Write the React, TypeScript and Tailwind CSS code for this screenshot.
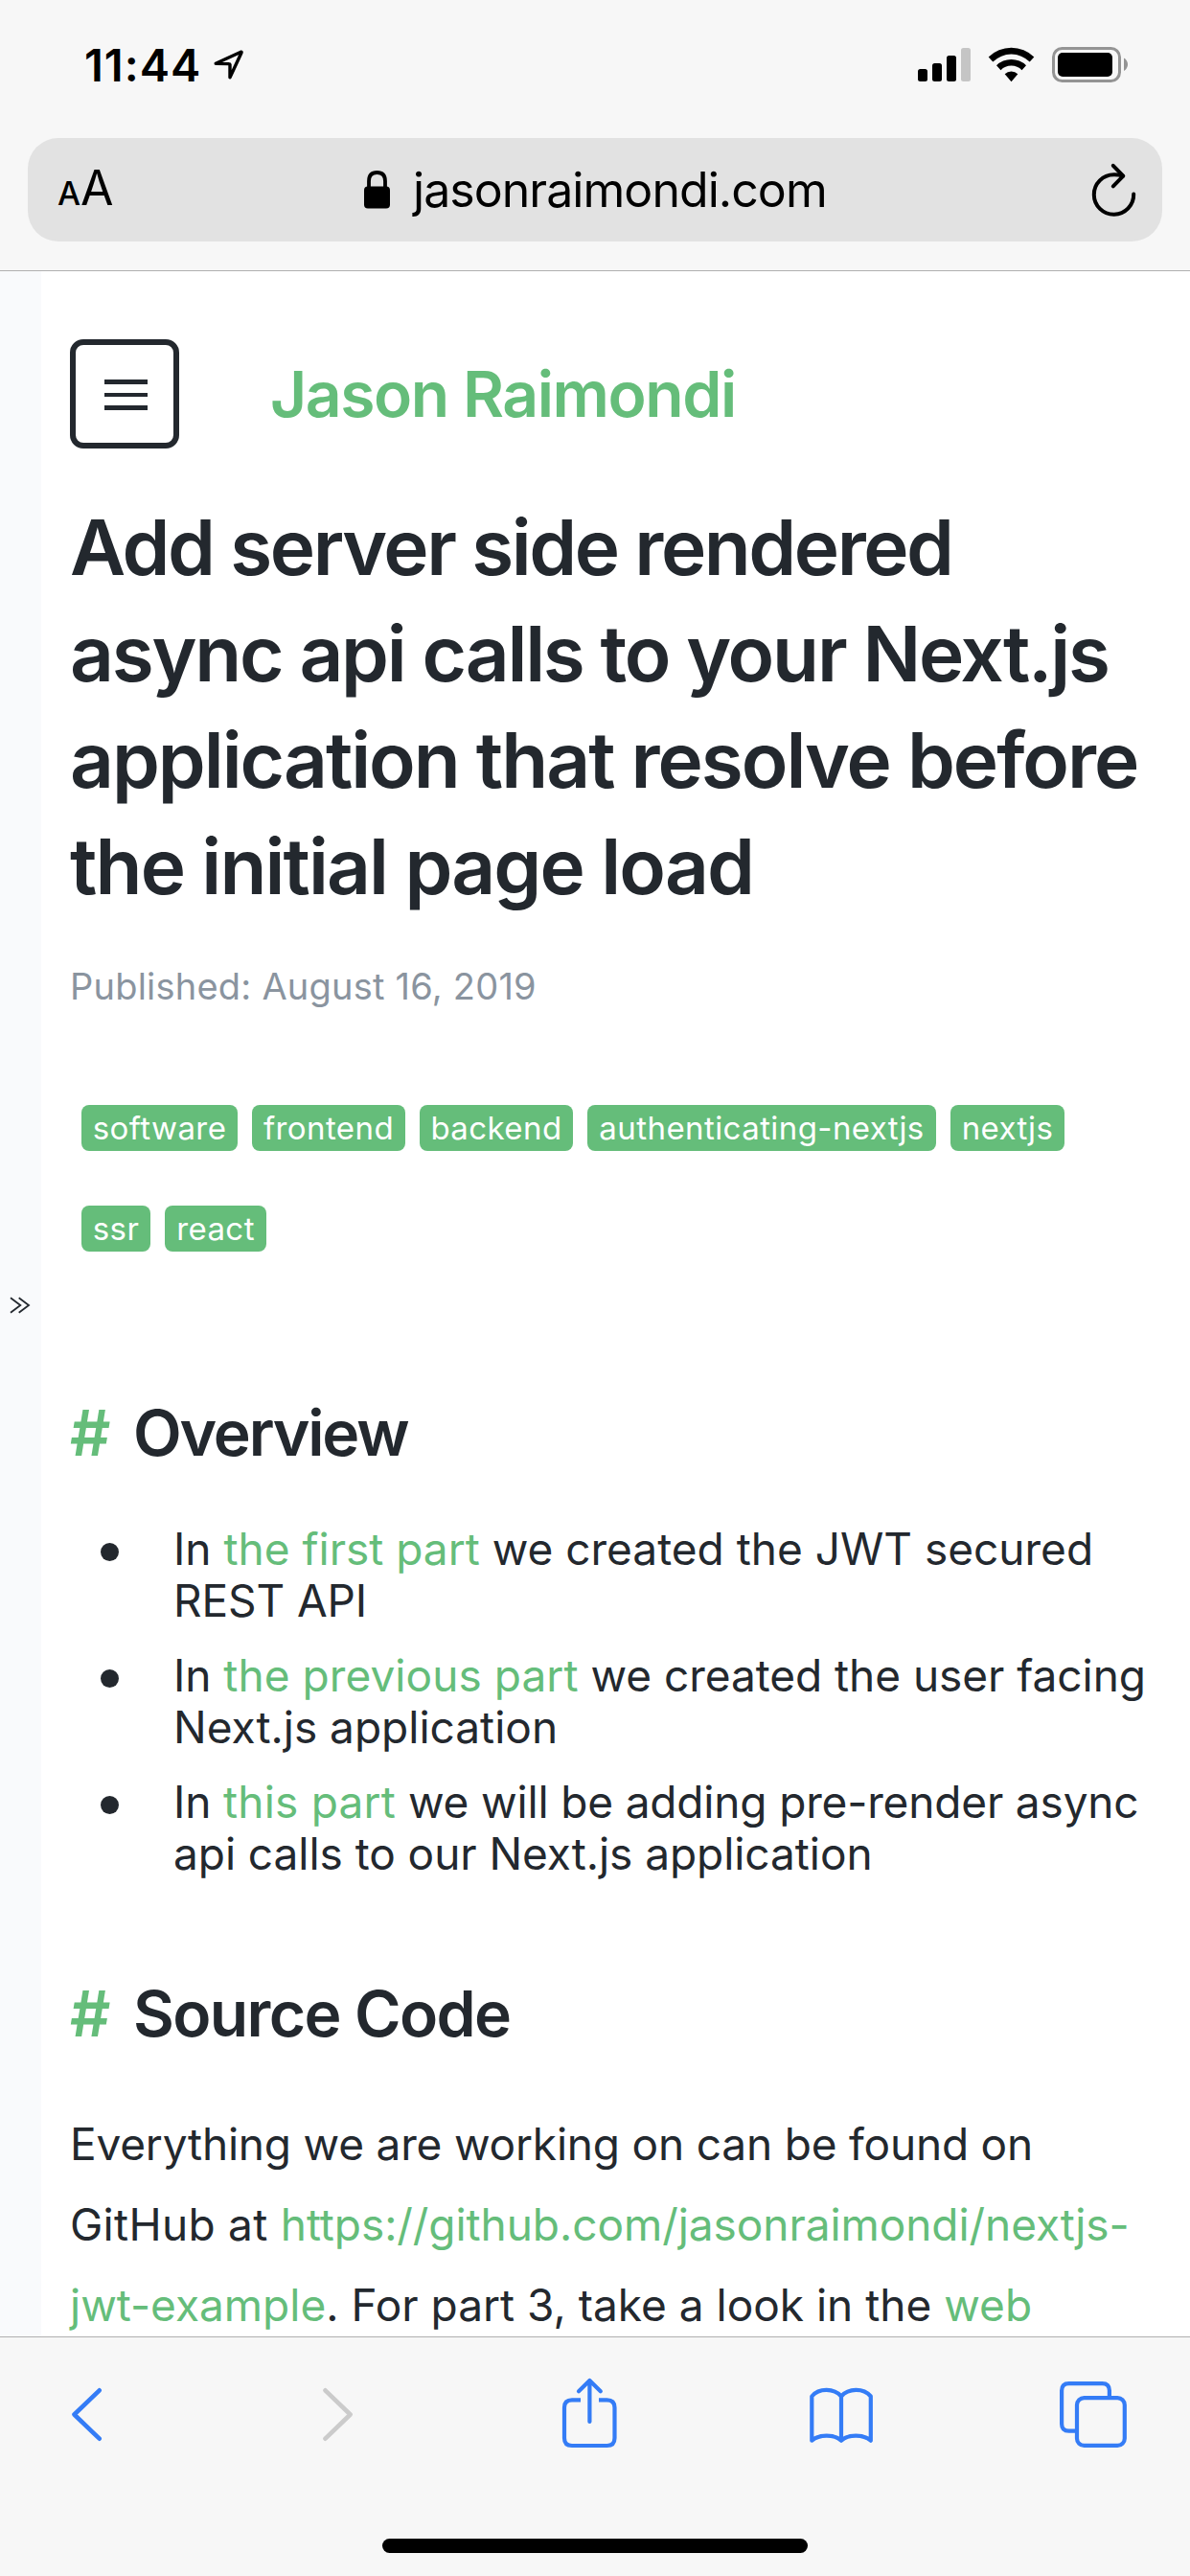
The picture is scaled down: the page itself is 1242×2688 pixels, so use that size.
import type { ReactNode } from 'react';

function StatusBar() {
  return (
    <div className="flex h-[144px] items-start pl-[88px] pr-[65px] pt-[32px]">
      <span className="h-[72px] w-[135px] whitespace-nowrap text-[47px] font-semibold leading-[72px] tracking-[1px]">11:44</span>
      <svg className="mt-[19px]" width="32" height="34" viewBox="0 0 32 34" fill="none">
        <path d="M2.2 15.2 L28.4 3.2 Q29.4 2.9 29 4 L17 29.8 L17 16.4 Q16.8 15.6 16 15.6 Z" stroke="#000" strokeWidth="3.4" strokeLinejoin="round" />
      </svg>
      <div className="grow" />
      <svg className="mt-[17px]" width="220" height="38" viewBox="957 49 220 38" fill="none">
        <rect x="958" y="72" width="10" height="13" rx="2.5" fill="#000" />
        <rect x="973" y="66" width="10" height="19" rx="2.5" fill="#000" />
        <rect x="988" y="58" width="10" height="27" rx="2.5" fill="#000" />
        <rect x="1003" y="50" width="10" height="35" rx="2.5" fill="#c5c5c5" />
        <path d="M1031.7 59.5 A34 34 0 0 1 1079.3 59.5 L1074.7 64.5 A27.2 27.2 0 0 0 1036.3 64.5 Z" fill="#000" />
        <path d="M1040 68.3 A22 22 0 0 1 1071 68.3 L1066.5 73.2 A15.5 15.5 0 0 0 1044.5 73.2 Z" fill="#000" />
        <path d="M1048.7 77.2 A10 10 0 0 1 1062.3 77.2 L1055.5 85.2 Z" fill="#000" />
        <rect x="1099.5" y="50.5" width="69" height="34" rx="9" stroke="#949494" strokeWidth="3" />
        <rect x="1104" y="55" width="57" height="25" rx="5" fill="#000" />
        <path d="M1173 60.5 Q1177 63 1177 67.2 Q1177 71.5 1173 74 Z" fill="#949494" />
      </svg>
    </div>
  );
}

function AddressBar() {
  return (
    <div className="mx-[29px] flex h-[108px] items-center rounded-[32px] bg-[#e2e2e2]">
      <div className="ml-[31px] mt-[2px] flex w-[320px] items-baseline leading-[72px]">
        <span className="text-[34px] font-medium">A</span>
        <span className="text-[50px]">A</span>
      </div>
      <svg className="-mt-[1px]" width="28" height="40" viewBox="0 0 28 40" fill="none">
        <rect x="0" y="16.5" width="27" height="23" rx="4" fill="#000" />
        <path d="M5 18 V11 Q5 2 13.5 2 Q22 2 22 11 V18" stroke="#000" strokeWidth="3.8" />
      </svg>
      <span className="ml-[23px] whitespace-nowrap text-[50px] leading-[72px] tracking-[-0.95px]">jasonraimondi.com</span>
      <div className="grow" />
      <svg className="mr-[25px]" width="50" height="60" viewBox="1138 168 50 60" fill="none" stroke="#000" strokeWidth="4" strokeLinecap="round" strokeLinejoin="round">
        <path d="M1183.2 202.5 A20.7 20.7 0 1 1 1162.5 182.3 Q1167 182.2 1172 183.7" />
        <path d="M1161.8 172.8 L1172.3 183.7 L1161.8 194.3" />
      </svg>
    </div>
  );
}

function Link({ children }: { children: ReactNode }) {
  return <a className="text-[#65bd7a]">{children}</a>;
}

function Tag({ width, children }: { width: string; children: ReactNode }) {
  return (
    <span className={`flex h-[48px] ${width} items-center justify-center rounded-[8px] bg-[#65bd7a] text-[33px] leading-none tracking-[0.42px] text-white`}>
      {children}
    </span>
  );
}

function SectionHeading({ spacing, children }: { spacing: string; children: ReactNode }) {
  return (
    <h2 className="flex h-[80px] whitespace-nowrap text-[66px] font-semibold leading-[80px]">
      <span className="w-[66px] text-[#65bd7a]">#</span>
      <span className={spacing}>{children}</span>
    </h2>
  );
}

function Item({ children }: { children: ReactNode }) {
  return (
    <li className="flex">
      <span className="ml-[32px] mt-[21px] size-[19px] shrink-0 rounded-full bg-[#23282e]" />
      <div className="ml-[57px]">{children}</div>
    </li>
  );
}

function Article() {
  return (
    <article className="w-[1169px] shrink-0 pl-[30px] pt-[71px]">
      <div className="flex h-[114px] items-center">
        <button className="flex size-[114px] flex-col items-center justify-center gap-[9px] rounded-[14px] border-[6px] border-[#23282e] pl-[3px] pt-[2px]">
          <span className="h-[4.5px] w-[45px] bg-[#23282e]" />
          <span className="h-[4.5px] w-[45px] bg-[#23282e]" />
          <span className="h-[4.5px] w-[45px] bg-[#23282e]" />
        </button>
        <span className="ml-[95px] whitespace-nowrap text-[66px] font-semibold leading-[80px] tracking-[-1.44px] text-[#65bd7a]">Jason Raimondi</span>
      </div>

      <h1 className="mt-[47px] whitespace-nowrap text-[80px] font-semibold leading-[111px]">
        <span className="block tracking-[-2.43px]">Add server side rendered</span>
        <span className="block tracking-[-2.21px]">async api calls to your Next.js</span>
        <span className="block tracking-[-2.01px]">application that resolve before</span>
        <span className="block tracking-[-1.87px]">the initial page load</span>
      </h1>

      <p className="mt-[40px] h-[60px] whitespace-nowrap text-[38px] leading-[60px] tracking-[0.22px] text-[#8a949f]">Published: August 16, 2019</p>

      <div className="ml-[12px] mt-[94px] flex flex-col gap-[57px]">
        <div className="flex gap-[15px]">
          <Tag width="w-[163px]">software</Tag>
          <Tag width="w-[160px]">frontend</Tag>
          <Tag width="w-[160px]">backend</Tag>
          <Tag width="w-[364px]">authenticating-nextjs</Tag>
          <Tag width="w-[119px]">nextjs</Tag>
        </div>
        <div className="flex gap-[15px]">
          <Tag width="w-[72px]">ssr</Tag>
          <Tag width="w-[106px]">react</Tag>
        </div>
      </div>

      <div className="mt-[149px]">
        <SectionHeading spacing="tracking-[-2.2px]">Overview</SectionHeading>
      </div>

      <ul className="mt-[54px] flex flex-col gap-[24px] whitespace-nowrap text-[46px] leading-[54px]">
        <Item>
          <p>In <Link>the first part</Link> we created the JWT secured</p>
          <p className="tracking-[-0.1px]">REST API</p>
        </Item>
        <Item>
          <p className="tracking-[-0.04px]">In <span className="tracking-[0.06px]"><Link>the previous part</Link></span> we created the user facing</p>
          <p>Next.js application</p>
        </Item>
        <Item>
          <p className="tracking-[-0.16px]">In <span className="tracking-[0.22px]"><Link>this part</Link></span> we will be adding pre-render async</p>
          <p className="tracking-[-0.05px]">api calls to our Next.js application</p>
        </Item>
      </ul>

      <div className="mt-[100px]">
        <SectionHeading spacing="tracking-[-1.64px]">Source Code</SectionHeading>
      </div>

      <div className="mt-[54px] whitespace-nowrap text-[46px] leading-[84px]">
        <p className="tracking-[-0.19px]">Everything we are working on can be found on</p>
        <p><span className="tracking-[0.3px]">GitHub at </span><span className="tracking-[-0.06px]"><Link>https://github.com/jasonraimondi/nextjs-</Link></span></p>
        <p><Link>jwt-example</Link>. For part 3, take a look in the <Link>web</Link></p>
      </div>
    </article>
  );
}

function Toolbar() {
  return (
    <footer className="flex h-[250px] flex-col border-t border-[#b0b0b0] bg-[#f7f7f7]">
      <div className="flex pl-[73px] pt-[41px] text-[#347cf6]">
        <svg width="35" height="76" viewBox="73 2480 35 76" fill="none" stroke="currentColor" strokeWidth="4.6" strokeLinecap="round" strokeLinejoin="round">
          <path d="M103.7 2494.3 L77.5 2519.5 L103.7 2544.7" />
        </svg>
        <svg className="ml-[227px]" width="35" height="76" viewBox="335 2480 35 76" fill="none" stroke="#cbcbcb" strokeWidth="4.6" strokeLinecap="round" strokeLinejoin="round">
          <path d="M339.5 2494.3 L365.6 2519.5 L339.5 2544.7" />
        </svg>
        <svg className="ml-[215px]" width="61" height="76" viewBox="585 2480 61 76" fill="none" stroke="currentColor" strokeWidth="4.2">
          <path d="M606 2504.3 H597 Q589 2504.3 589 2512.3 V2544 Q589 2552 597 2552 H633.5 Q641.5 2552 641.5 2544 V2512.3 Q641.5 2504.3 633.5 2504.3 H625" />
          <path d="M615.4 2484.5 V2527 M604 2495.3 L615.4 2484 L626.8 2495.3" strokeLinecap="round" strokeLinejoin="round" />
        </svg>
        <svg className="ml-[197px]" width="70" height="76" viewBox="843 2480 70 76" fill="none" stroke="currentColor" strokeWidth="4.2" strokeLinejoin="round" strokeLinecap="round">
          <path d="M878 2500.5 C870.5 2492 855 2491.5 847.3 2500.5 V2546.7 C855 2540 870.5 2540 878 2546.7 C885.5 2540 901 2540 908.8 2546.7 V2500.5 C901 2491.5 885.5 2492 878 2500.5 Z M878 2500.5 V2546.7" />
        </svg>
        <svg className="ml-[191px]" width="74" height="76" viewBox="1104 2480 74 76" fill="none" stroke="currentColor" strokeWidth="4.2">
          <path d="M1157.9 2501 V2494.6 Q1157.9 2487.1 1150.4 2487.1 H1115.6 Q1108.1 2487.1 1108.1 2494.6 V2529.2 Q1108.1 2536.7 1115.6 2536.7 H1123" />
          <rect x="1124" y="2502.1" width="49.8" height="49.8" rx="7.5" />
        </svg>
      </div>
      <div className="mx-auto mt-[93px] h-[15px] w-[444px] rounded-full bg-black" />
    </footer>
  );
}

export default function App() {
  return (
    <div className="flex h-[2688px] w-[1242px] flex-col overflow-hidden bg-white font-['Inter','Liberation_Sans',sans-serif] text-[#23282e]">
      <header className="h-[283px] shrink-0 border-b border-[#b0b0b0] bg-[#f7f7f7] text-black">
        <StatusBar />
        <AddressBar />
      </header>
      <main className="flex h-[2155px] shrink-0 overflow-hidden">
        <aside className="flex h-full w-[43px] shrink-0 items-center bg-[#f9fafc] pl-[10px] pt-[3px]">
          <svg width="22" height="18" viewBox="0 0 22 18" fill="none" stroke="#23282e" strokeWidth="1.8">
            <path d="M1 1.3 L11.3 9 L1 16.7 M9.7 1.3 L20 9 L9.7 16.7" />
          </svg>
        </aside>
        <Article />
      </main>
      <Toolbar />
    </div>
  );
}
